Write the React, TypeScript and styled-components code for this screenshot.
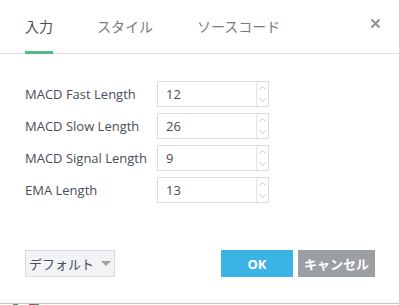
import React from 'react';
import styled, { createGlobalStyle } from 'styled-components';

const GlobalStyle = createGlobalStyle`
  html, body {
    margin: 0;
    padding: 0;
    background: #ffffff;
  }
  body {
    font-family: "Open Sans", "Noto Sans CJK JP", sans-serif;
    overflow: hidden;
  }
`;

const params = [
  { label: 'MACD Fast Length', value: '12' },
  { label: 'MACD Slow Length', value: '26' },
  { label: 'MACD Signal Length', value: '9' },
  { label: 'EMA Length', value: '13' },
];

const tabs = ['入力', 'スタイル', 'ソースコード'];

export default function App() {
  return (
    <>
      <GlobalStyle />
      <Dialog>
        <Header>
          <Tabs>
            {tabs.map((t, i) => (
              <Tab key={t} active={i === 0}>
                {t}
              </Tab>
            ))}
          </Tabs>
          <Close>
            <svg width="11" height="11" viewBox="0 0 11 11">
              <path d="M1.5 1.5 L9.5 9.5 M9.5 1.5 L1.5 9.5" stroke="#8d9097" strokeWidth="2" />
            </svg>
          </Close>
        </Header>
        <Body>
          {params.map((p) => (
            <Row key={p.label}>
              <Label>{p.label}</Label>
              <NumberBox>
                <Value>{p.value}</Value>
                <Spinner>
                  <SpinHalf>
                    <svg width="7" height="4" viewBox="0 0 7 4">
                      <path d="M0.5 3.5 L3.5 0.5 L6.5 3.5" stroke="#c3c6cb" fill="none" />
                    </svg>
                  </SpinHalf>
                  <SpinHalf>
                    <svg width="7" height="4" viewBox="0 0 7 4">
                      <path d="M0.5 0.5 L3.5 3.5 L6.5 0.5" stroke="#c3c6cb" fill="none" />
                    </svg>
                  </SpinHalf>
                </Spinner>
              </NumberBox>
            </Row>
          ))}
        </Body>
        <Footer>
          <DefaultsButton>
            デフォルト
            <Caret />
          </DefaultsButton>
          <Actions>
            <ActionButton kind="primary">OK</ActionButton>
            <ActionButton kind="secondary">キャンセル</ActionButton>
          </Actions>
        </Footer>
      </Dialog>
      <ChartEdge>
        <Candle color="#3aa05a" style={{ left: 13 }} />
        <Candle color="#e0393e" style={{ left: 29 }} />
        <Candle color="#3aa05a" style={{ left: 34 }} />
      </ChartEdge>
    </>
  );
}

const Dialog = styled.div`
  width: 399px;
  height: 303px;
  display: flex;
  flex-direction: column;
  background: #fff;
  box-sizing: border-box;
`;

const Header = styled.div`
  height: 54px;
  display: flex;
  align-items: stretch;
  justify-content: space-between;
  border-bottom: 1px solid #dadde0;
  box-sizing: border-box;
  padding: 0 18px 0 25px;
`;

const Tabs = styled.div`
  display: flex;
  gap: 44px;
`;

const Tab = styled.div<{ active?: boolean }>`
  font-size: 14px;
  color: ${({ active }) => (active ? '#4a4e57' : '#777b84')};
  padding-top: 16px;
  box-sizing: border-box;
  border-bottom: 3px solid ${({ active }) => (active ? '#53b987' : 'transparent')};
  margin-bottom: -1px;
`;

const Close = styled.div`
  padding-top: 18px;
  display: flex;
  align-items: flex-start;

  svg {
    display: block;
  }
`;

const Body = styled.div`
  padding: 27px 0 0 25px;
  display: flex;
  flex-direction: column;
  gap: 6px;
  flex: 1;
`;

const Row = styled.div`
  display: flex;
  align-items: center;
  height: 26px;
`;

const Label = styled.div`
  width: 132px;
  font-size: 13px;
  color: #4a4e57;
`;

const NumberBox = styled.div`
  width: 112px;
  height: 26px;
  box-sizing: border-box;
  border: 1px solid #dadde0;
  display: flex;
`;

const Value = styled.div`
  flex: 1;
  padding-left: 8px;
  font-size: 13px;
  color: #4a4e57;
  display: flex;
  align-items: center;
`;

const Spinner = styled.div`
  width: 11px;
  border-left: 1px solid #e4e6e9;
  display: flex;
  flex-direction: column;
`;

const SpinHalf = styled.div`
  flex: 1;
  display: flex;
  align-items: center;
  justify-content: center;
`;

const Footer = styled.div`
  display: flex;
  justify-content: space-between;
  align-items: center;
  padding: 0 24px 26px 25px;
`;

const DefaultsButton = styled.div`
  width: 90px;
  height: 27px;
  box-sizing: border-box;
  border: 1px solid #d6d9dd;
  background: #f2f3f5;
  font-size: 13px;
  color: #4a4e57;
  display: flex;
  align-items: center;
  justify-content: center;
  gap: 7px;
`;

const Caret = styled.span`
  width: 0;
  height: 0;
  border-left: 5px solid transparent;
  border-right: 5px solid transparent;
  border-top: 5px solid #9ea1a7;
`;

const Actions = styled.div`
  display: flex;
  gap: 5px;
`;

const ActionButton = styled.div<{ kind: 'primary' | 'secondary' }>`
  height: 27px;
  width: ${({ kind }) => (kind === 'primary' ? '72px' : '77px')};
  background: ${({ kind }) => (kind === 'primary' ? '#3bb3e4' : '#9b9ea3')};
  color: #fff;
  font-size: 13px;
  font-weight: 700;
  display: flex;
  align-items: center;
  justify-content: center;
`;

const ChartEdge = styled.div`
  position: relative;
  height: 2px;
  border-top: 1px solid #c6c8cc;
  background: #fff;
`;

const Candle = styled.div<{ color: string }>`
  position: absolute;
  top: 0;
  width: 5px;
  height: 2px;
  background: ${({ color }) => color};
`;
